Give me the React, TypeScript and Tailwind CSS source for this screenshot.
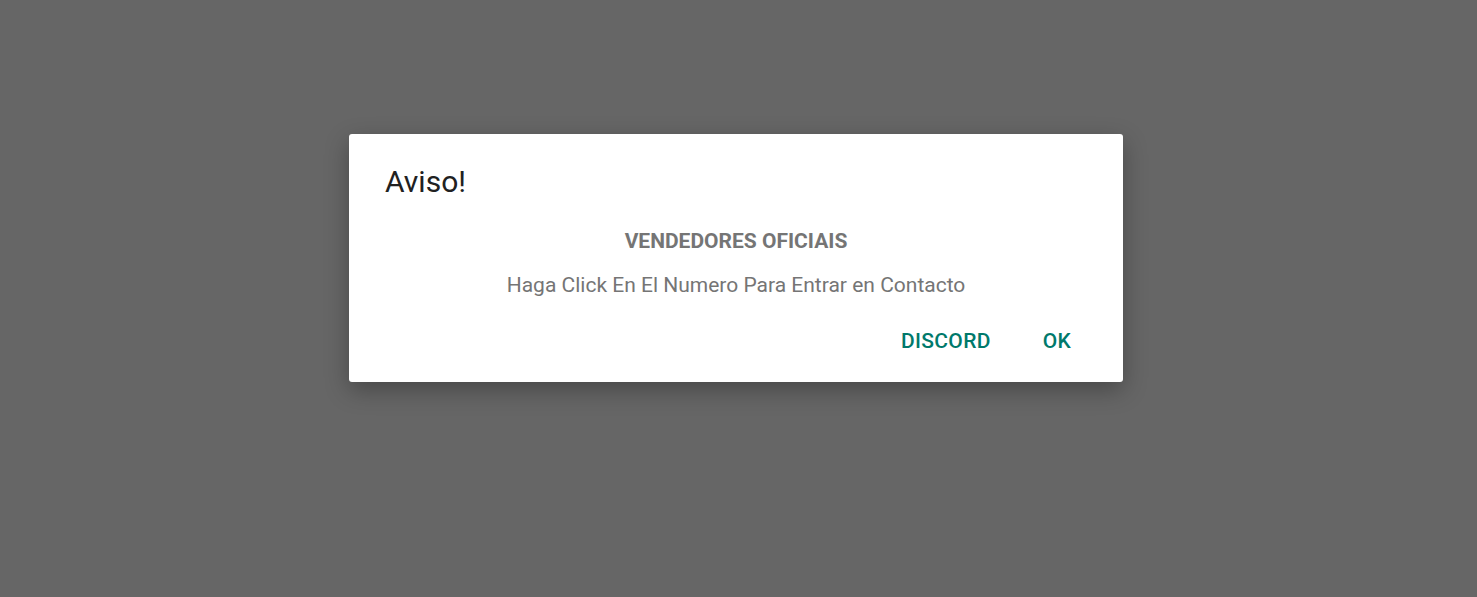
export default function App() {
  return (
    <div className="w-[1477px] h-[597px] bg-[#666666] pt-[134px] pl-[349px]" style={{ fontFamily: "Roboto, 'Noto Sans', sans-serif" }}>
      <div className="w-[774px] h-[248px] bg-white rounded-[3px] shadow-[0_8px_24px_rgba(0,0,0,0.3)] flex flex-col">
        <div className="pl-[36px] mt-[30px] text-[30px] leading-[36px] text-[#212121]">Aviso!</div>
        <div className="mt-[27px] text-center text-[21px] leading-[28px] font-bold text-[#757575]">VENDEDORES OFICIAIS</div>
        <div className="mt-[16px] text-center text-[21px] leading-[28px] text-[#757575]">Haga Click En El Numero Para Entrar en Contacto</div>
        <div className="mt-[28px] flex justify-end pr-[52px] gap-[52px]">
          <span className="text-[21px] leading-[28px] font-medium text-[#00796b] tracking-[0.3px]">DISCORD</span>
          <span className="text-[21px] leading-[28px] font-medium text-[#00796b] tracking-[0.3px]">OK</span>
        </div>
      </div>
    </div>
  );
}
